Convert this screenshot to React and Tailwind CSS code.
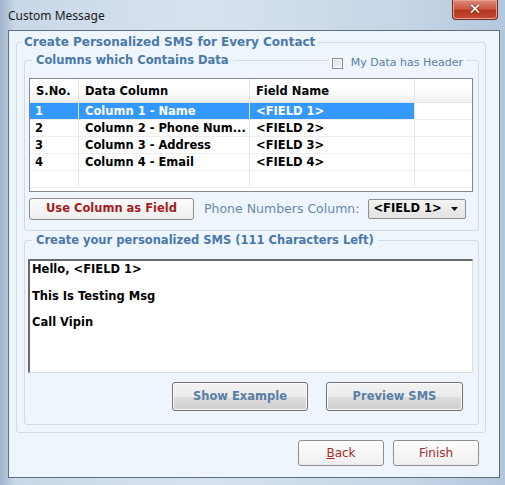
import React from 'react';

const font = { fontFamily: '"DejaVu Sans", Verdana, sans-serif' };

const rows = [
  { no: '1', col: 'Column 1 - Name', field: '<FIELD 1>' },
  { no: '2', col: 'Column 2 - Phone Num...', field: '<FIELD 2>' },
  { no: '3', col: 'Column 3 - Address', field: '<FIELD 3>' },
  { no: '4', col: 'Column 4 - Email', field: '<FIELD 4>' },
];

const GridRow = ({ row, selected }) => {
  const cell = selected ? 'bg-[#3399ff] text-white' : 'text-black';
  return (
    <div className="flex h-[17px] border-b border-[#eeeeee] text-[11.5px] font-bold leading-[17px]">
      <div className={`w-[49px] pl-[5px] border-r border-[#e6e6e6] ${cell}`}>{row?.no}</div>
      <div className={`w-[171px] pl-[6px] border-r border-[#e6e6e6] whitespace-nowrap overflow-hidden ${cell}`}>{row?.col}</div>
      <div className={`w-[165px] pl-[6px] border-r border-[#e6e6e6] ${cell}`}>{row?.field}</div>
      <div className="flex-1" />
    </div>
  );
};

const GrayButton = ({ children, className = '' }) => (
  <button
    className={`rounded-[3px] border border-[#707070] bg-[linear-gradient(#f2f2f2_0%,#ebebeb_50%,#dddddd_51%,#cfcfcf_100%)] shadow-[inset_0_0_0_1px_#fcfcfc] ${className}`}
  >
    {children}
  </button>
);

export default function App() {
  return (
    <div
      className="w-[505px] h-[485px] overflow-hidden flex flex-col bg-[linear-gradient(90deg,#9fb4cb_0%,#c9d8e8_3%,#d7e2ee_40%,#c6d6e7_80%,#b3c7dc_100%)]"
      style={font}
    >
      {/* title bar */}
      <div className="h-[30px] flex items-start shrink-0">
        <span
          className="pl-[8px] pt-[7px] text-[12px] text-[#1a1a1a]"
          style={{ fontFamily: '"Noto Sans", "Open Sans", sans-serif' }}
        >
          Custom Message
        </span>
        <div className="ml-auto mr-[7px] w-[46px] h-[20px] rounded-b-[4px] border border-t-0 border-[#6e2a22] bg-[linear-gradient(#dd8a79_0%,#cc5a45_45%,#b5361f_55%,#c44c34_100%)] flex items-center justify-center shadow-[inset_0_0_0_1px_#e8a395]">
          <span className="text-white text-[15px] font-bold leading-none [text-shadow:0_0_2px_#3a1010]">✕</span>
        </div>
      </div>

      {/* client area */}
      <div className="ml-[8px] w-[492px] h-[448px] border border-[#5f6f80] bg-[#eef5fc] flex flex-col">
        <fieldset className="ml-[7px] mt-[3px] w-[470px] border border-[#d2dae2] rounded-[3px] px-[5px] pb-[7px]">
          <legend className="px-[2px] text-[12px] font-bold text-[#4a78a8] leading-[16px]">
            Create Personalized SMS for Every Contact
          </legend>

          {/* columns group */}
          <fieldset className="relative ml-[2px] mt-[3px] w-[455px] border border-[#d2dae2] rounded-[3px] pl-[4px] pr-[5px] pb-[10px]">
            <legend className="ml-[3px] px-[4px] text-[11.5px] font-bold text-[#4a78a8] leading-[15px]">
              Columns which Contains Data
            </legend>
            <label className="absolute right-[12px] top-[-13px] bg-[#eef5fc] flex items-center gap-[8px] pl-[3px] pr-[3px] text-[11px] text-[#5b7ea6]">
              <span className="w-[11px] h-[11px] border border-[#8f8f8f] bg-[linear-gradient(135deg,#dcdcdc,#f8f8f8)] shadow-[inset_0_0_0_1px_#f4f4f4]" />
              My Data has Header
            </label>

            <div className="mt-[10px] h-[114px] border border-[#828790] bg-white">
              <div className="flex h-[24px] border-b border-[#e2e3e5] bg-[linear-gradient(#ffffff_0%,#ffffff_40%,#f1f2f4_100%)] text-[11.5px] font-bold leading-[24px] text-black">
                <div className="w-[49px] pl-[6px] border-r border-[#e3e4e6]">S.No.</div>
                <div className="w-[171px] pl-[6px] border-r border-[#e3e4e6]">Data Column</div>
                <div className="w-[165px] pl-[6px] border-r border-[#e3e4e6]">Field Name</div>
                <div className="flex-1" />
              </div>
              {rows.map((r, i) => (
                <GridRow key={r.no} row={r} selected={i === 0} />
              ))}
              <GridRow />
            </div>

            <div className="mt-[6px] flex items-center">
              <button className="w-[165px] h-[22px] rounded-[3px] border border-[#8a8a8a] bg-[linear-gradient(#fbfbfb,#eeeeee)] text-[11.5px] font-bold text-[#a51d1d]">
                Use Column as Field
              </button>
              <span className="ml-[10px] text-[12.5px] text-[#6889ad]">Phone Numbers Column:</span>
              <div className="ml-[9px] w-[98px] h-[20px] rounded-[2px] border border-[#8d8d8d] bg-[linear-gradient(#f4f4f4,#e2e2e2)] flex items-center pl-[4px] pr-[7px] text-[11.5px] font-bold text-black">
                <span>&lt;FIELD 1&gt;</span>
                <svg className="ml-auto" width="7" height="4" viewBox="0 0 7 4">
                  <path d="M0 0h7L3.5 4z" fill="#111" />
                </svg>
              </div>
            </div>
          </fieldset>

          {/* sms group */}
          <fieldset className="ml-[2px] mt-[2px] w-[455px] border border-[#d2dae2] rounded-[3px] pl-[3px] pr-[5px] pb-[13px]">
            <legend className="ml-[4px] px-[4px] text-[11.5px] font-bold text-[#4a78a8] leading-[15px]">
              Create your personalized SMS (111 Characters Left)
            </legend>
            <div className="mt-[11px] h-[114px] border-t-2 border-l-2 border-t-[#6a6a6a] border-l-[#6a6a6a] border-r border-b border-r-[#dcdcdc] border-b-[#dcdcdc] bg-white pl-[2px] pt-[2px] text-[11.5px] font-bold text-black leading-[13.3px]">
              <div>Hello, &lt;FIELD 1&gt;</div>
              <div className="h-[13.3px]" />
              <div>This Is Testing Msg</div>
              <div className="h-[13.3px]" />
              <div>Call Vipin</div>
            </div>
            <div className="mt-[9px] flex justify-end gap-[18px] pr-[10px]">
              <GrayButton className="w-[136px] h-[29px] text-[11.5px] font-bold text-[#5a7da3]">Show Example</GrayButton>
              <GrayButton className="w-[137px] h-[29px] text-[11.5px] font-bold text-[#5a7da3]">Preview SMS</GrayButton>
            </div>
          </fieldset>
        </fieldset>

        <div className="mt-[7px] flex justify-end gap-[9px] pr-[20px]">
          <button className="w-[86px] h-[26px] rounded-[3px] border border-[#8e8e8e] bg-[linear-gradient(#fdfdfd,#efefef)] text-[12px] text-[#a52a2a]">
            <span className="underline">B</span>ack
          </button>
          <button className="w-[86px] h-[26px] rounded-[3px] border border-[#8e8e8e] bg-[linear-gradient(#fdfdfd,#efefef)] text-[12px] text-[#a52a2a]">
            Finish
          </button>
        </div>
      </div>
    </div>
  );
}
